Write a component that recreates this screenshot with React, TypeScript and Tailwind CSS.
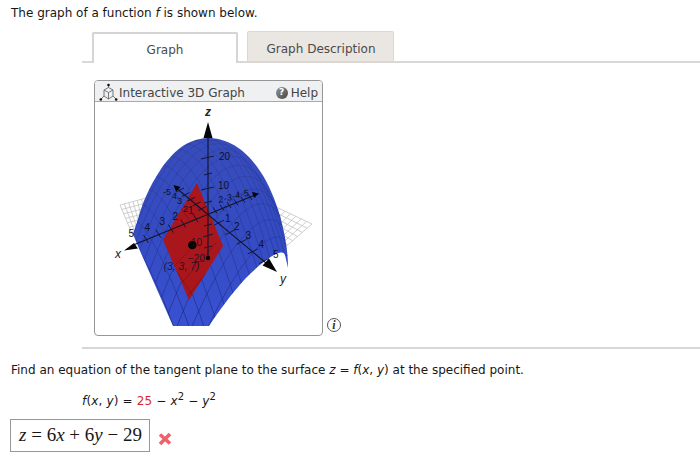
import React from "react";

type P = [number, number];

// Perspective projection of graph coordinates to canvas pixels.
const project = (x: number, y: number, z: number): P => {
  const w = 1 - 0.044 * (x + y) - 0.0055 * z;
  return [208 + (-11.4 * x + 9.8 * y) / w, 213 + (4.9 * x + 7.6 * y - 2.5 * z) / w];
};

const onSurface = (x: number, y: number): P => project(x, y, 25 - x * x - y * y);

// True where the outer side of the paraboloid faces the viewer.
const facing = (x: number, y: number) => {
  const e = 0.01;
  const p = onSurface(x, y);
  const a = onSurface(x + e, y);
  const b = onSurface(x, y + e);
  return (a[0] - p[0]) * (b[1] - p[1]) - (a[1] - p[1]) * (b[0] - p[0]) < 0;
};

const steps = Array.from({ length: 81 }, (_, i) => -5 + i / 8);
const grid = Array.from({ length: 21 }, (_, i) => -5 + i / 2);

const trace = (at: (s: number) => P) => {
  let d = "";
  let pen = false;
  for (const s of steps) {
    const [x, y] = at(s);
    if (facing(x, y)) {
      const [u, v] = onSurface(x, y);
      d += `${pen ? "L" : "M"}${u.toFixed(1)} ${v.toFixed(1)}`;
      pen = true;
    } else pen = false;
  }
  return d;
};

const mesh = grid.map((g) => trace((s) => [g, s]) + trace((s) => [s, g])).join("");

const mix = (a: P, b: P, t: number): P => [a[0] + (b[0] - a[0]) * t, a[1] + (b[1] - a[1]) * t];

function Patch({ a, b, c, d, n, m }: { a: P; b: P; c: P; d: P; n: number; m: number }) {
  return (
    <g stroke="#c3c3c3" strokeWidth="0.8">
      {Array.from({ length: n + 1 }, (_, i) => {
        const p = mix(a, b, i / n);
        const q = mix(d, c, i / n);
        return <line key={`n${i}`} x1={p[0]} y1={p[1]} x2={q[0]} y2={q[1]} />;
      })}
      {Array.from({ length: m + 1 }, (_, i) => {
        const p = mix(a, d, i / m);
        const q = mix(b, c, i / m);
        return <line key={`m${i}`} x1={p[0]} y1={p[1]} x2={q[0]} y2={q[1]} />;
      })}
    </g>
  );
}

const SURFACE =
  "M208 138 C186 139 173 152 161 169 C149 187 142 204 138 219 L133 234 L137 244 L173 326 L209 326 C219 311 232 293 245 279 C256 268 267 258 276 254 C281 252 284 252 285 255 L288 268 C288 248 284 231 280 216 C276 202 269 184 260 171 C247 151 229 138 208 138 Z";
const PLANE = "197,183 223,246 189,300 163,240";

function Ticks({ from, to, n, dx, dy }: { from: P; to: P; n: number; dx: number; dy: number }) {
  return (
    <>
      {Array.from({ length: n }, (_, i) => {
        const [x, y] = mix(from, to, (i + 1) / n);
        return <line key={i} x1={x - dx} y1={y - dy} x2={x + dx} y2={y + dy} />;
      })}
    </>
  );
}

function Plot() {
  return (
    <svg width="227" height="232" viewBox="95 102 227 232" className="block">
      <defs>
        <clipPath id="surface"><path d={SURFACE} /></clipPath>
        <clipPath id="plane"><polygon points={PLANE} /></clipPath>
        <linearGradient id="blue" x1="0" y1="0" x2="0" y2="1">
          <stop offset="0" stopColor="#384cba" />
          <stop offset="0.5" stopColor="#354bc2" />
          <stop offset="1" stopColor="#3951d2" />
        </linearGradient>
        <linearGradient id="meshInk" gradientUnits="userSpaceOnUse" x1="0" y1="138" x2="0" y2="326">
          <stop offset="0" stopColor="#16267a" stopOpacity="0.22" />
          <stop offset="0.5" stopColor="#16267a" stopOpacity="0.35" />
          <stop offset="1" stopColor="#101e66" stopOpacity="0.6" />
        </linearGradient>
      </defs>
      <Patch a={[120, 205]} b={[146, 198]} c={[151, 232]} d={[133, 236]} n={6} m={7} />
      <Patch a={[312, 224]} b={[274, 206]} c={[254, 230]} d={[283, 249]} n={7} m={6} />
      <path d={SURFACE} fill="url(#blue)" />
      <g clipPath="url(#surface)">
        <path d={mesh} fill="none" stroke="url(#meshInk)" strokeWidth="0.9" />
      </g>
      <polygon points={PLANE} fill="#a9161b" />
      <g clipPath="url(#plane)" stroke="#650d22" strokeOpacity="0.45" strokeWidth="1">
        <path d="M180 207L190 221M188 194L200 211M180 285L216 243M187 297L225 250M172 268L190 250M170 262L196 300" />
      </g>
      <g stroke="#101329" strokeWidth="1.1" fill="none">
        <path d="M208 134V258M255 195L131 246M175 187L272 268" />
        <g strokeWidth="0.9">
          <Ticks from={[208, 213]} to={[146, 239]} n={5} dx={2.5} dy={4} />
          <Ticks from={[208, 213]} to={[250, 197]} n={6} dx={2} dy={3} />
          <Ticks from={[208, 213]} to={[264, 261]} n={5} dx={5} dy={-2.5} />
          <Ticks from={[208, 213]} to={[180, 190]} n={5} dx={4} dy={-2} />
          <path d="M201 159L214 156M204 175L212 173M201 190L214 187M204 203L212 201M204 226L212 224M203 237L213 234M204 248L212 246" />
        </g>
      </g>
      <g fill="#050505">
        <path d="M208 122L203.500 138H212.500Z" />
        <path d="M124 250.500L134 243L138 248.500Z" />
        <path d="M277 272L269 258.500L262.500 265.500Z" />
        <path d="M259 193.500L252 192L254 198Z" />
        <path d="M173.500 185L180.500 187L176 191.500Z" />
        <circle cx="192.300" cy="245" r="4.300" />
        <circle cx="208" cy="258" r="2.200" />
      </g>
      <g fill="#0c1026" fontFamily="'Liberation Sans', Arial, sans-serif" fontSize="10">
        <text x="219" y="159.500">20</text>
        <text x="218" y="189">10</text>
        <text x="191" y="246" fillOpacity="0.8">10</text>
        <text x="188" y="262" fillOpacity="0.85">−20</text>
        <text x="128.500" y="237">5</text>
        <text x="144.500" y="230.500">4</text>
        <text x="159.500" y="225">3</text>
        <text x="172.500" y="219.500">2</text>
        <text x="188" y="214">1</text>
        <text x="225" y="222">1</text>
        <text x="234" y="230">2</text>
        <text x="245.500" y="239">3</text>
        <text x="258.500" y="248">4</text>
        <text x="273" y="258">5</text>
        <text x="163" y="195" fontSize="9">-5</text>
        <text x="172" y="199" fontSize="9">4</text>
        <text x="177" y="203.500" fontSize="9">3</text>
        <text x="183" y="212" fontSize="9">2</text>
        <text x="219" y="203" fontSize="9" fontStyle="italic" textLength="31" transform="rotate(-14 219 203)">2-3-4-5</text>
        <text x="163.500" y="270" fontSize="10.500" fontStyle="italic" textLength="36" fillOpacity="0.85">(3, 3, 7)</text>
      </g>
      <g fill="#222" fontFamily="'Liberation Sans', Arial, sans-serif" fontSize="12" fontStyle="italic">
        <text x="205" y="115.500" fontWeight="bold">z</text>
        <text x="115" y="258">x</text>
        <text x="280" y="283">y</text>
      </g>
    </svg>
  );
}

function CubeIcon() {
  return (
    <svg width="19" height="19" viewBox="0 0 19 19" className="mt-[2px] block shrink-0">
      <path d="M9.500 4.500L14 7V13L9.500 16L5 13V7ZM5 7L9.500 9.500L14 7M9.500 9.500V16M9.500 2V4.500M5 13L1.500 16.500M14 13L17.500 16.500" fill="none" stroke="#6a6a6a" strokeWidth="0.9" />
      <g fill="#111">
        <circle cx="9.500" cy="2" r="1.300" />
        <circle cx="1.800" cy="16.500" r="1.300" />
        <circle cx="17.200" cy="16.500" r="1.300" />
      </g>
    </svg>
  );
}

const MINUS = "−";

export default function App() {
  return (
    <main className="flex h-[466px] w-[700px] flex-col overflow-hidden bg-white font-['DejaVu_Sans',Verdana,sans-serif] text-[12px] text-[#171717]">
      <p className="h-[31px] pl-[11px] pt-[4px] leading-[18px] whitespace-nowrap">
        The graph of a function <i>f</i> is shown below.
      </p>

      <div className="flex h-8 pl-[82px] text-[#4b4b4b]">
        <div className="w-[10px] border-b-2 border-[#d9d8d6]" />
        <div className="mt-px flex w-[146px] items-center justify-center rounded-t-[2px] border-2 border-b-0 border-[#d6d5d3] pt-[3px]">Graph</div>
        <div className="w-[9px] border-b-2 border-[#d9d8d6]" />
        <div className="flex w-[147px] items-center justify-center rounded-t-[2px] border border-b-2 border-[#dcd7d2] bg-[#eae6e1] pl-px pt-[5px]">Graph Description</div>
        <div className="flex-1 border-b-2 border-[#d9d8d6]" />
      </div>

      <div className="ml-[82px] flex h-[286px] border-b-2 border-[#d7d7d7] pl-3 pt-[17px]">
        <section className="h-[256px] w-[229px] overflow-hidden rounded-[4px] border border-[#969696]">
          <header className="flex h-[21px] items-center border-b border-[#aaa] bg-[#eef0f2] pl-[4px] text-[#454545]">
            <CubeIcon />
            <span className="mt-[4px] ml-px whitespace-nowrap">Interactive 3D Graph</span>
            <span className="mt-[4px] mr-[4px] ml-auto flex items-center gap-[3px]">
              <span className="flex size-3 items-center justify-center rounded-full bg-linear-to-br from-[#999] to-[#444] text-[9px] font-bold text-white">?</span>
              Help
            </span>
          </header>
          <Plot />
        </section>
        <svg width="16" height="16" viewBox="0 0 16 16" className="mt-[237px] ml-[3px]">
          <circle cx="8" cy="8" r="6.500" fill="none" stroke="#555" strokeWidth="1" />
          <text x="8" y="12" textAnchor="middle" fill="#333" fontFamily="'Liberation Serif', serif" fontSize="12" fontStyle="italic" fontWeight="bold">i</text>
        </svg>
      </div>

      <p className="mt-[12px] h-[18px] pl-[11px] leading-[18px] whitespace-nowrap">
        Find an equation of the tangent plane to the surface <i>z</i> = <i>f</i>(<i>x</i>, <i>y</i>) at the specified point.
      </p>
      <p className="mt-[12px] h-[20px] pl-[82px] leading-[20px] tracking-[0.15px] whitespace-nowrap">
        <i>f</i>(<i>x</i>, <i>y</i>) = <span className="text-[#d9292e]">25</span> {MINUS} <i>x</i><sup className="text-[10px]">2</sup> {MINUS} <i>y</i><sup className="text-[10px]">2</sup>
      </p>
      <div className="mt-[8px] flex h-[33px] pl-[10px]">
        <div className="flex w-[140px] items-center justify-center border border-[#999] pl-px font-['Liberation_Serif',serif] text-[19px] whitespace-nowrap">
          <span><i>z</i> = 6<i>x</i> + 6<i>y</i> {MINUS} 29</span>
        </div>
        <svg width="14" height="14" viewBox="0 0 14 14" className="mt-[13px] ml-[8px]">
          <path d="M2 2.500L12 11.500M12 2L2 12" stroke="#ee626c" strokeWidth="3.600" />
        </svg>
      </div>
    </main>
  );
}
